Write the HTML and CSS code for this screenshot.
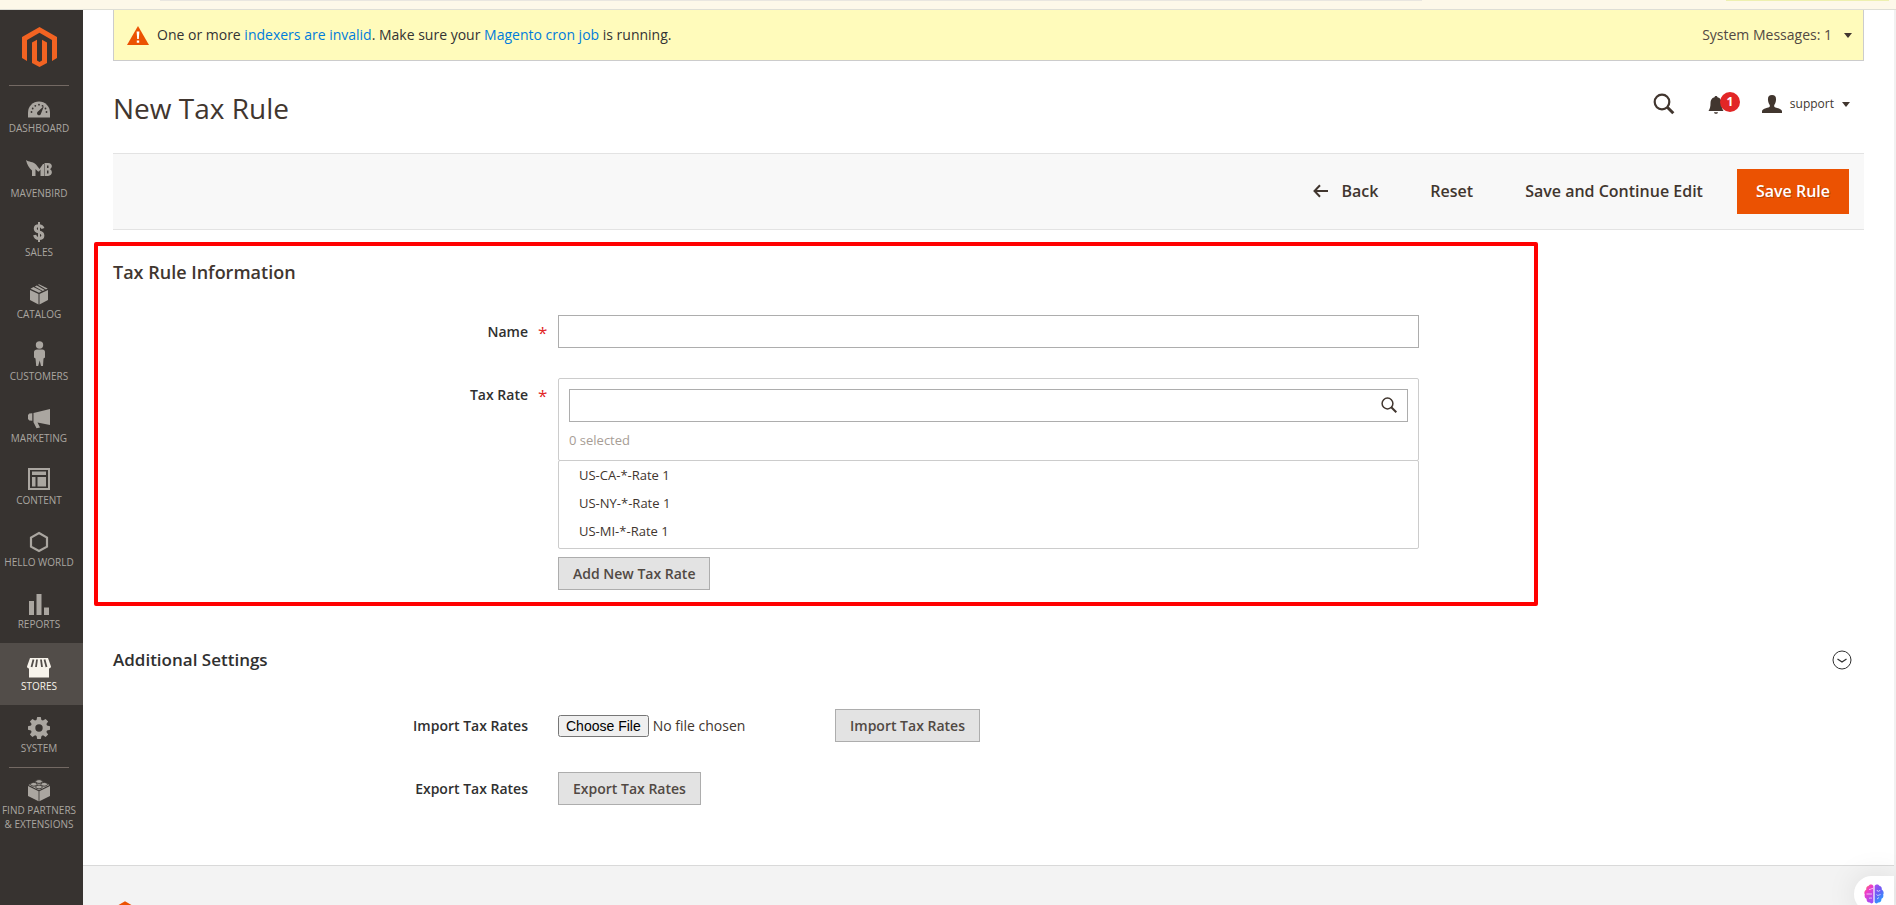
FILE: index.html
```html
<!DOCTYPE html>
<html lang="en">
<head>
<meta charset="utf-8">
<title>New Tax Rule</title>
<link rel="stylesheet" href="styles.css">
</head>
<body>
<div class="browser-edge"><span class="edge-address"></span><span class="edge-chip"></span></div>
<div class="shell">
  <nav class="menu" aria-label="Main">
    <a class="logo" href="#" aria-label="Home">
      <svg viewBox="0 0 35 40" width="35" height="40" fill="#f26322"><path d="M17.500 0 35 10v21l-5 3V13L17.500 5.800 5 13v21l-5-3V10z"/><path d="M10 15.500l5-2.800v20.800l2.500 1.500 2.500-1.500V12.700l5 2.800V36l-7.500 4L10 36z"/></svg>
    </a>
    <ul class="menu-list">
      <li class="ruled"><a class="item" href="#"><svg class="icon" viewBox="0 0 24 24"><path d="M1 21.500v-5a11 11 0 0 1 22 0v5z"/><g fill="#373330"><circle cx="4.500" cy="16" r=".9"/><circle cx="5.700" cy="12.500" r=".9"/><circle cx="8.300" cy="9.800" r=".9"/><circle cx="12" cy="8.700" r=".9"/><circle cx="15.500" cy="9.800" r=".9"/><circle cx="19.500" cy="16" r=".9"/><circle cx="18.500" cy="12.500" r=".9"/><path d="M17 10l-3 7.500a2 2 0 1 1-3.300-1.800z"/></g></svg>Dashboard</a></li>
      <li><a class="item item-brand" href="#"><svg class="icon icon-brand" viewBox="0 0 26 24"><path d="M0 2c3 2.500 7 1 10 4.500L13.500 11 17 6h1v12h-3.500v-6.500l-1.500 2h-1L9.500 11v7H6v-5.500C3 10 1 6.500 0 2z"/><path d="M18.500 5H22c5 0 4.500 5 2 6.200 3 1.300 2.500 6.800-2 6.800h-3.500zm2.500 2.500v2.500h1.500v-2.500zm0 5v3h1.500v-3z" fill-rule="evenodd"/></svg>Mavenbird</a></li>
      <li><a class="item" href="#"><svg class="icon" viewBox="0 0 24 24"><path d="M16 8.500c-.6-2-2-2.800-4-2.800-5 0-5 5.300 0 6.300 5.300 1 5 6.500 0 6.500-2.500 0-4-1.200-4.300-3.500" fill="none" stroke="#aaa6a0" stroke-width="3"/><path d="M11 2h2v20h-2z"/></svg>Sales</a></li>
      <li><a class="item" href="#"><svg class="icon" viewBox="0 0 24 24"><path d="M3 8l8.500 4v10.500L3 18zM21 8l-8.500 4v10.500L21 18zM3.500 6.700l3-1.600 8.300 4.200-2.800 1.500zM7.800 4.500l2-1 8 4.400-2 1zM11 2.700l1-.5 8.700 4.300-1.800.9z"/></svg>Catalog</a></li>
      <li><a class="item" href="#"><svg class="icon icon-tall" viewBox="0 0 24 28"><circle cx="12.500" cy="4" r="3.700"/><path d="M10 8.500h5.500c1.500 0 2.500 1 2.500 2.500v5.500l-1.500 1-.5 7.500h-2l-1.300-5.500-1.500 5.500h-2l-.7-7.500-1.500-1V11c0-1.500 1.500-2.500 3-2.500z"/></svg>Customers</a></li>
      <li><a class="item" href="#"><svg class="icon" viewBox="0 0 24 24"><path d="M23 3v16l-12.500-2.600L13 21.500l-3.500.8-3-6V7zM5.300 7.300v7.400l-3-.2L1 13V9l1.300-1.500z"/></svg>Marketing</a></li>
      <li><a class="item" href="#"><svg class="icon" viewBox="0 0 24 24"><path d="M1 0h22v22H1zm2 2v18h18V2zm2 1.500h14V7H5zM5 9h3.500v9.500H5zm5.500 0H19v9.500h-8.500z" fill-rule="evenodd"/></svg>Content</a></li>
      <li><a class="item" href="#"><svg class="icon" viewBox="0 0 24 24"><path d="M12 3l8 4.600v9L12 21l-8-4.400v-9z" fill="none" stroke="#aaa6a0" stroke-width="2.200"/></svg>Hello World</a></li>
      <li><a class="item" href="#"><svg class="icon" viewBox="0 0 24 24"><path d="M2 9h5v14H2zM9.500 2h5v21h-5zM17 15.500h5V23h-5z"/></svg>Reports</a></li>
      <li><a class="item item-active" href="#" aria-current="page"><svg class="icon" viewBox="0 0 24 24"><path d="M3 4h18l3 8.500c0 1-.8 1.700-2 1.900V23.500H2v-9.100c-1.200-.2-2-.9-2-1.900z"/><path d="M6.500 5.500l-2 7.500M10 5.500L9 13M14 5.500l1 7.500M17.500 5.500l2 7.500" stroke="#524d49" stroke-width="1.800" fill="none"/></svg>Stores</a></li>
      <li><a class="item" href="#"><svg class="icon" viewBox="0 0 24 24"><path d="M10.200 1h3.600l.6 3 1.500.6L18.600 3l2.500 2.500-1.700 2.600.6 1.500 3 .6v3.600l-3 .6-.6 1.500 1.700 2.600-2.500 2.500-2.600-1.700-1.500.6-.7 3.100h-3.600l-.6-3.100-1.500-.6L5.400 21l-2.500-2.500 1.700-2.600-.6-1.500-3-.6v-3.600l3-.6.6-1.500-1.700-2.600L5.400 3 8 4.600 9.500 4zM12 8.300a3.700 3.700 0 1 0 0 7.400 3.700 3.700 0 0 0 0-7.400z" fill-rule="evenodd"/></svg>System</a></li>
      <li class="ruled"><a class="item" href="#"><svg class="icon" viewBox="0 0 24 24"><path d="M1 8l10.600 5.300v10L1 18zM23 8l-10.600 5.300v10L23 18zM1.500 7L12 1.800 22.500 7 12 12.300z"/><g stroke="#373330" stroke-width=".9" fill="#aaa6a0"><ellipse cx="12" cy="3.500" rx="3.300" ry="1.900"/><ellipse cx="6.800" cy="6.300" rx="3.300" ry="1.900"/><ellipse cx="17.200" cy="6.300" rx="3.300" ry="1.900"/><ellipse cx="12" cy="9" rx="3.300" ry="1.900"/></g></svg>Find Partners<br>&amp; Extensions</a></li>
    </ul>
  </nav>

  <div class="page">
    <div class="content">
      <div class="notice">
        <svg class="notice-icon" viewBox="0 0 22 19" width="22" height="19"><path d="M11 0l11 19H0z" fill="#eb5202"/><path d="M9.600 5.500h2.800l-.6 7.500h-1.600zM9.800 14.500h2.400v2.300H9.800z" fill="#fff"/></svg>
        <p class="notice-text">One or more <a href="#">indexers are invalid</a>. Make sure your <a href="#">Magento cron job</a> is running.</p>
        <button class="notice-toggle" type="button">System Messages: 1 <span class="caret"></span></button>
      </div>

      <header class="head">
        <h1 class="title">New Tax Rule</h1>
        <div class="tools">
          <button class="tool" type="button" aria-label="Search"><svg viewBox="0 0 22 22" width="22" height="22" fill="none" stroke="#41362f"><circle cx="9" cy="9" r="7.300" stroke-width="2.200"/><path d="M14.300 14.300l6 6" stroke-width="3"/></svg></button>
          <button class="tool bell" type="button" aria-label="Notifications"><svg viewBox="0 0 16 20" width="16" height="20" fill="#41362f"><path d="M8 2c1 0 1.400.6 1.500 1.300C12.500 4 13.500 6.500 13.500 9c0 4 .5 5.500 2 8H.5c1.500-2.500 2-4 2-8 0-2.500 1-5 4-5.700C6.600 2.600 7 2 8 2zM6 18.200h4c-.3 2-3.700 2-4 0z"/></svg><span class="badge">1</span></button>
          <button class="account" type="button"><svg viewBox="0 0 20 18" width="20" height="18" fill="#41362f"><path d="M10 0c3 0 4.300 1.800 4 5-.2 2.500-1 4-1.800 5v1.500c.3 1.500 7.800 1.500 7.800 5V18H0v-1.500c0-3.500 7.500-3.500 7.800-5V10C7 9 6.200 7.500 6 5 5.700 1.800 7 0 10 0z"/></svg><span>support</span><span class="caret"></span></button>
        </div>
      </header>

      <div class="actions">
        <button class="action" type="button"><svg viewBox="0 0 15 14" width="15" height="14" fill="none" stroke="#41362f" stroke-width="2"><path d="M15 7H2M7 1.200L1.500 7 7 12.800"/></svg>Back</button>
        <button class="action" type="button">Reset</button>
        <button class="action" type="button">Save and Continue Edit</button>
        <button class="action action-primary" type="button">Save Rule</button>
      </div>

      <form class="form">
        <section class="section section-marked">
          <h2 class="legend">Tax Rule Information</h2>
          <div class="field">
            <label class="label required" for="name">Name</label>
            <input class="text" id="name" type="text">
          </div>
          <div class="field">
            <label class="label required" for="rate-search">Tax Rate</label>
            <div class="control">
              <div class="picker">
                <div class="search">
                  <input class="text" id="rate-search" type="text">
                  <svg class="search-icon" viewBox="0 0 16 16" width="16" height="16" fill="none" stroke="#41362f"><circle cx="6.500" cy="6.500" r="5.400" stroke-width="1.500"/><path d="M10.300 10.300l5 5" stroke-width="2"/></svg>
                </div>
                <p class="count">0 selected</p>
              </div>
              <ul class="rates"><li>US-CA-*-Rate 1</li><li>US-NY-*-Rate 1</li><li>US-MI-*-Rate 1</li></ul>
              <button class="button" type="button">Add New Tax Rate</button>
            </div>
          </div>
        </section>

        <section class="section">
          <div class="fold">
            <h2 class="legend legend-small">Additional Settings</h2>
            <button class="fold-toggle" type="button" aria-label="Toggle Additional Settings"><svg viewBox="0 0 20 20" width="20" height="20" fill="none" stroke="#303030"><circle cx="10" cy="10" r="9"/><path d="M5.500 9l4.500 3 4.500-3" stroke-width="1.300"/></svg></button>
          </div>
          <div class="field">
            <label class="label" for="import">Import Tax Rates</label>
            <div class="import"><input class="file" id="import" type="file"><button class="button" type="button">Import Tax Rates</button></div>
          </div>
          <div class="field">
            <span class="label">Export Tax Rates</span>
            <div class="control"><button class="button" type="button">Export Tax Rates</button></div>
          </div>
        </section>
      </form>
    </div>
    <footer class="footer">
      <svg viewBox="0 0 35 40" width="24" height="28" fill="#eb5202"><path d="M17.500 0 35 10v21l-5 3V13L17.500 5.800 5 13v21l-5-3V10z"/><path d="M10 15.500l5-2.800v20.800l2.500 1.500 2.500-1.500V12.700l5 2.800V36l-7.500 4L10 36z"/></svg>
    </footer>
  </div>
  <div class="scroll-edge"></div>
</div>
<button class="assistant" type="button" aria-label="Assistant">
  <svg viewBox="0 0 20 20" width="20" height="20"><defs><linearGradient id="warm" x1="0" y1="0" x2=".6" y2="1"><stop offset="0" stop-color="#ff8a3c"/><stop offset=".4" stop-color="#f03cc8"/><stop offset="1" stop-color="#a04cf5"/></linearGradient><linearGradient id="cool" x1="0" y1="0" x2=".5" y2="1"><stop offset="0" stop-color="#b04cf0"/><stop offset=".5" stop-color="#6a5cf5"/><stop offset="1" stop-color="#2a9cff"/></linearGradient></defs><path d="M9.400 2C8-.3 5 .3 4.500 2 2.500 2.300 2 4 2.300 5.500.5 6.500-.2 9 .8 10.500c-.6 2 .3 3.700 1.700 4.300C2.500 18 4.500 19 6 18.500c1 1.500 3 1 3.400-.5z" fill="url(#warm)"/><path d="M10.600 2C12-.3 15 .3 15.500 2c2 .3 2.500 2 2.200 3.500 1.800 1 2.500 3.500 1.500 5 .6 2-.3 3.700-1.700 4.300 0 3.200-2 4.200-3.500 3.700-1 1.500-3 1-3.400-.5z" fill="url(#cool)"/><path d="M2.500 10h5.500M5 5.500c2 0 2-1 4-1M5 14.500c1-1 2 0 3-.5M13 6c0 2 3 1.500 3 0M12.500 10.500c1.500 2 3 0 4 0M13 15l2-1.500" fill="none" stroke="#fff" stroke-opacity=".75" stroke-width=".9"/></svg>
</button>
</body>
</html>
```
FILE: styles.css
```css
*, *::before, *::after { box-sizing: border-box; }
html, body { height: 100%; margin: 0; }
body {
  display: flex;
  flex-direction: column;
  overflow: hidden;
  background: #fff;
  color: #41362f;
  font: 14px/20px "Open Sans", "Noto Sans", sans-serif;
}
h1, h2, p, ul { margin: 0; padding: 0; }
ul { list-style: none; }
button { font: inherit; color: inherit; background: none; border: 0; padding: 0; cursor: pointer; }
svg { display: block; flex: none; }
a { color: #007bdb; text-decoration: none; }

.browser-edge {
  display: flex;
  justify-content: space-between;
  flex: none;
  height: 10px;
  padding: 0 7px 0 160px;
  background: #fdf8e9;
  border-bottom: 1px solid #deded6;
}
.edge-address { width: 73%; height: 1px; background: #e9e6e0; }
.edge-chip { width: 163px; height: 1px; background: #eef0b0; }

.shell { display: flex; flex: 1; min-height: 0; overflow: hidden; }

.menu { flex: none; width: 83px; background: #373330; }
.logo { display: flex; justify-content: center; padding: 17px 5px 18px 0; }
.item {
  display: flex;
  flex-direction: column;
  align-items: center;
  height: 62px;
  padding: 11px 5px 0 0;
  color: #aaa6a0;
  font-size: 10px;
  line-height: 14px;
  text-align: center;
  text-transform: uppercase;
  white-space: nowrap;
}
.item-active { background: #524d49; color: #f7f3eb; }
.icon { width: 24px; height: 24px; margin-bottom: 1px; fill: currentColor; }
.icon-brand { width: 26px; margin-bottom: 4px; }
.icon-tall { height: 28px; margin: -3px 0 0; }
.ruled { position: relative; }
.ruled::before { content: ""; position: absolute; top: 0; left: 9px; width: 60px; height: 1px; background: #736963; }

.page { display: flex; flex-direction: column; flex: 1; min-width: 0; }
.scroll-edge { flex: none; width: 2px; background: #f1f1f1; }
.content { flex: none; padding: 0 30px; }

.notice {
  display: flex;
  align-items: center;
  height: 51px;
  padding: 0 11px 0 13px;
  background: #fffbbb;
  border: solid #ccc;
  border-width: 0 1px 1px;
  color: #333;
}
.notice-icon { margin-right: 8px; }
.notice-text { flex: 1; padding-bottom: 1px; }
.notice-toggle { display: flex; align-items: center; gap: 12px; color: #514943; }
.caret { border: solid transparent; border-width: 5px 4px 0; border-top-color: #41362f; }

.head { display: flex; justify-content: space-between; align-items: center; height: 92px; padding: 0 14px 0 0; }
.title { padding-top: 2px; font-size: 28px; line-height: 36px; font-weight: 400; }
.tools { display: flex; align-items: center; padding-bottom: 6px; }
.tool { margin-right: 33px; }
.bell { position: relative; margin-right: 38px; }
.badge {
  position: absolute;
  left: 12px;
  top: -2px;
  width: 20px;
  height: 20px;
  border-radius: 50%;
  background: #e22626;
  color: #fff;
  font-size: 12px;
  line-height: 20px;
  font-weight: 700;
}
.account { display: flex; align-items: center; gap: 8px; font-size: 12px; }

.actions {
  display: flex;
  justify-content: flex-end;
  align-items: center;
  height: 77px;
  padding-right: 15px;
  background: #f8f8f8;
  border: solid #e3e3e3;
  border-width: 1px 0;
  font-size: 16px;
  font-weight: 600;
}
.action { display: flex; align-items: center; gap: 13px; height: 45px; padding: 0 26px 2px; }
.action-primary { margin-left: 8px; padding: 0 19px 2px; background: #eb5202; color: #fff; text-shadow: 1px 1px 0 rgba(0, 0, 0, .25); }

.section { position: relative; }
.section-marked { padding: 30px 0 27px; }
.section-marked::after {
  content: "";
  position: absolute;
  top: 12px;
  bottom: 41px;
  left: -19px;
  width: calc(82% + 8px);
  border: 4px solid #f00;
  border-radius: 2px;
  pointer-events: none;
}
.legend { margin-bottom: 30px; font-size: 18px; line-height: 25px; font-weight: 600; }
.field { display: grid; grid-template-columns: 415fr 861fr 415fr; column-gap: 30px; margin-bottom: 30px; }
.label { position: relative; color: #303030; font-weight: 600; line-height: 33px; text-align: right; }
.required::after { content: "*"; position: absolute; left: calc(100% + 10px); top: 1px; color: #e22626; font-size: 17px; font-weight: 400; }
.text { display: block; width: 100%; height: 33px; padding: 0 10px; border: 1px solid #adadad; border-radius: 0; font: inherit; background: #fff; }
.picker { height: 83px; padding: 10px; border: 1px solid #ccc; border-radius: 2px; }
.search { position: relative; }
.search-icon { position: absolute; right: 11px; top: 8px; }
.count { margin-top: 8px; color: #a79d95; font-size: 13px; }
.rates { margin: -1px 0 8px; padding: 0 20px 3px; border: 1px solid #ccc; border-radius: 2px; font-size: 13px; line-height: 28px; }
.button { height: 33px; padding: 0 14px; border: 1px solid #adadad; background: #e3e3e3; color: #514943; font-weight: 600; }

.fold { display: flex; justify-content: space-between; align-items: center; margin-bottom: 37px; padding-right: 12px; color: #303030; }
.legend-small { margin: 0; font-size: 17px; }
.import { display: flex; align-items: center; }
.file { width: 277px; font: inherit; }
.file::file-selector-button { font: 14px "Liberation Sans", Arial, sans-serif; }

.footer { flex: 1; margin-top: 30px; padding: 35px 30px 0; background: #f3f3f3; border-top: 1px solid #d9d9d9; }
.assistant {
  position: fixed;
  right: 2px;
  bottom: -7px;
  display: flex;
  align-items: center;
  width: 40px;
  height: 36px;
  padding: 0 10px;
  border-radius: 18px 0 0 18px;
  background: #fff;
  box-shadow: 0 0 30px rgba(0, 0, 0, .1);
}
```
